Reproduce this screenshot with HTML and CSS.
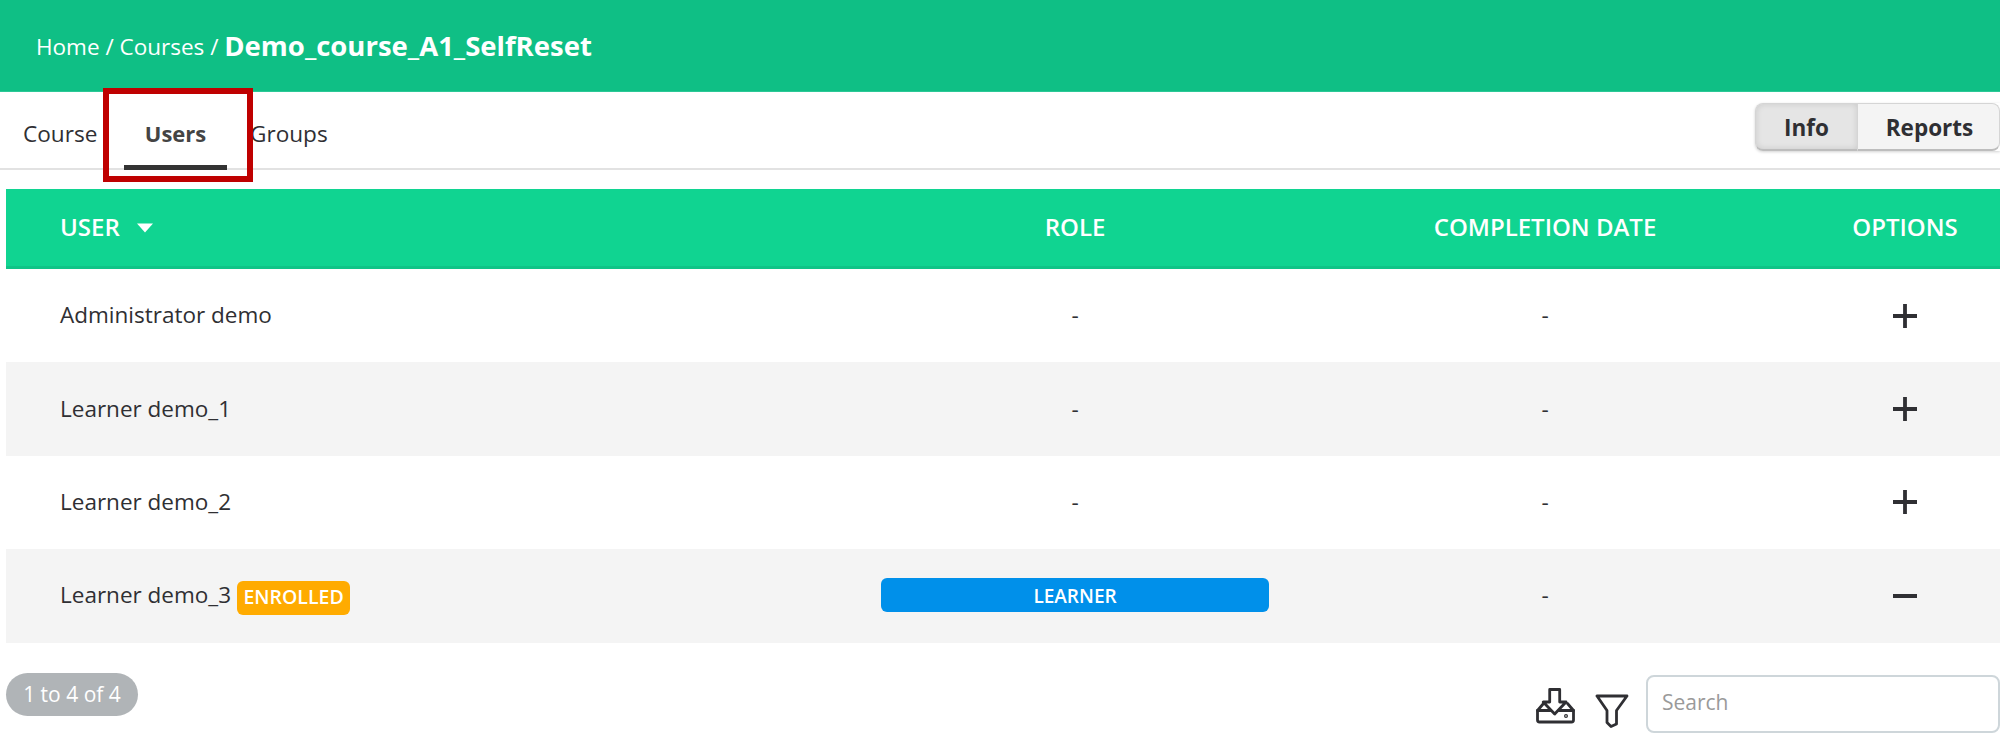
FILE: index.html
```html
<!DOCTYPE html>
<html lang="en">
<head>
<meta charset="utf-8">
<title>Demo_course_A1_SelfReset</title>
<link rel="stylesheet" href="styles.css">
</head>
<body>
<header class="topbar">
  <span class="crumb">Home / Courses / </span><strong class="crumb-title">Demo_course_A1_SelfReset</strong>
</header>
<nav class="tabbar">
  <div class="tabs">
    <a class="tab tab-course">Course</a>
    <a class="tab tab-users">Users</a>
    <a class="tab tab-groups">Groups</a>
    <span class="annotation"></span>
  </div>
  <div class="switch">
    <button class="switch-btn is-active">Info</button>
    <button class="switch-btn">Reports</button>
  </div>
</nav>
<main class="content">
  <div class="table">
    <div class="row head">
      <div class="cell cell-user">USER <svg class="caret" width="18" height="10" viewBox="0 0 18 10"><path d="M1 0.500h16L9 9.500z" fill="#fff"/></svg></div>
      <div class="cell">ROLE</div>
      <div class="cell">COMPLETION DATE</div>
      <div class="cell">OPTIONS</div>
    </div>
    <div class="row">
      <div class="cell cell-user">Administrator demo</div>
      <div class="cell">-</div>
      <div class="cell">-</div>
      <div class="cell"><svg class="opt" width="26" height="26" viewBox="0 0 26 26"><path d="M13 1v24M1 13h24" stroke="#2f2f33" stroke-width="3.800"/></svg></div>
    </div>
    <div class="row alt">
      <div class="cell cell-user">Learner demo_1</div>
      <div class="cell">-</div>
      <div class="cell">-</div>
      <div class="cell"><svg class="opt" width="26" height="26" viewBox="0 0 26 26"><path d="M13 1v24M1 13h24" stroke="#2f2f33" stroke-width="3.800"/></svg></div>
    </div>
    <div class="row">
      <div class="cell cell-user">Learner demo_2</div>
      <div class="cell">-</div>
      <div class="cell">-</div>
      <div class="cell"><svg class="opt" width="26" height="26" viewBox="0 0 26 26"><path d="M13 1v24M1 13h24" stroke="#2f2f33" stroke-width="3.800"/></svg></div>
    </div>
    <div class="row alt">
      <div class="cell cell-user">Learner demo_3 <span class="badge">ENROLLED</span></div>
      <div class="cell"><span class="role">LEARNER</span></div>
      <div class="cell">-</div>
      <div class="cell"><svg class="opt" width="26" height="26" viewBox="0 0 26 26"><path d="M1 13h24" stroke="#2f2f33" stroke-width="4"/></svg></div>
    </div>
  </div>
  <div class="footer">
    <span class="count">1 to 4 of 4</span>
    <div class="tools">
      <svg class="tool tool-export" width="40" height="36" viewBox="0 0 40 36" fill="none" stroke="#2f2f33" stroke-width="2.800" stroke-linejoin="round" stroke-linecap="round"><path d="M13.700 1.500h10V14h6.300L18.700 26 7.200 14h6.500z"/><path d="M7.500 15.500L1.500 22.500v9.500a2 2 0 0 0 2 2h32a2 2 0 0 0 2-2v-9.500l-6-7"/><path d="M1.500 22.500H14.500M23 22.500h14.500"/><circle cx="30" cy="28" r="0.600"/></svg>
      <svg class="tool tool-filter" width="34" height="34" viewBox="0 0 34 34" fill="none" stroke="#2f2f33" stroke-width="2.800" stroke-linejoin="round"><path d="M2 2h30L21.500 16.500V30L16 32.500l-4-4V16.500z"/></svg>
      <input class="search" type="text" placeholder="Search">
    </div>
  </div>
</main>
</body>
</html>
```
FILE: styles.css
```css
* { box-sizing: border-box; }
html, body { margin: 0; padding: 0; }
body {
  width: 2000px;
  height: 734px;
  overflow: hidden;
  background: #fff;
  color: #2f2f33;
  font-family: "Open Sans", "Liberation Sans", sans-serif;
  font-size: 22.500px;
}
.topbar {
  height: 92px;
  background: #0fbf85;
  border-bottom: 1px solid #2cc896;
  color: #fff;
  padding: 2px 0 0 36px;
  display: flex;
  align-items: center;
  white-space: pre;
}
.crumb { font-size: 22.500px; }
.crumb-title { font-size: 27.500px; font-weight: 700; margin-top: -2px; }
.tabbar {
  height: 78px;
  border-bottom: 2px solid #e2e2e2;
  display: flex;
  justify-content: space-between;
  align-items: flex-start;
}
.tabs { display: flex; position: relative; height: 78px; }
.tab { display: block; height: 78px; padding-top: 27px; font-size: 22.600px; line-height: 30px; color: #2f2f33; }
.tab-course { margin-left: 23px; width: 101px; }
.tab-users {
  width: 103px;
  font-size: 22px;
  font-weight: 700;
  text-align: center;
  color: #444;
  padding-top: 26px;
  border-bottom: 5px solid #333;
}
.tab-groups { margin-left: 23px; }
.annotation {
  position: absolute;
  left: 103px;
  top: -4px;
  width: 150px;
  height: 94px;
  border: 6px solid #bf0000;
  pointer-events: none;
}
.switch {
  display: flex;
  margin-top: 11px;
  height: 48px;
  border-radius: 8px 0 0 8px;
  box-shadow: 0 1px 3px rgba(0,0,0,.18);
}
.switch-btn {
  font-family: inherit;
  font-size: 22.500px;
  font-weight: 700;
  color: #2f2f33;
  background: #f4f4f4;
  border: 1px solid #d5d5d5;
  border-bottom: 2px solid #bdbdbd;
  border-left: 0;
  width: 142px;
  padding: 2px 0 0 2px;
  border-radius: 0 8px 8px 0;
}
.switch-btn.is-active {
  background: #e5e5e5;
  width: 103px;
  padding-left: 0;
  border-left: 1px solid #d5d5d5;
  border-radius: 8px 0 0 8px;
  box-shadow: inset 0 0 6px rgba(0,0,0,.12);
}
.content { padding: 19px 0 0 6px; }
.row {
  display: grid;
  grid-template-columns: 864px 410px 530px 190px;
  height: 93.400px;
  align-items: center;
}
.row.alt { background: #f4f4f4; }
.row.head {
  height: 80px;
  background: #10d491;
  border-bottom: 3px solid #0fc487;
  color: #fff;
  font-size: 24px;
  font-weight: 600;
}
.cell { text-align: center; line-height: 30px; padding-bottom: 1px; }
.cell-user { text-align: left; padding-left: 54px; }
.caret { margin-left: 10px; vertical-align: 3px; }
.opt { display: block; margin: 1px auto 0; }
.badge {
  display: inline-block;
  background: #ffab00;
  color: #fff;
  font-size: 19.500px;
  font-weight: 600;
  line-height: 30px;
  height: 34px;
  margin: -4px 0;
  padding: 1px 6.500px;
  border-radius: 6px;
  vertical-align: -1px;
}
.role {
  display: block;
  width: 388px;
  height: 34px;
  margin: 0 auto;
  background: #0090ea;
  color: #fff;
  font-size: 19px;
  font-weight: 600;
  line-height: 36px;
  border-radius: 6px;
}
.footer {
  display: flex;
  justify-content: space-between;
  align-items: flex-start;
  padding-top: 30px;
}
.count {
  width: 132px;
  height: 43px;
  line-height: 43px;
  text-align: center;
  border-radius: 22px;
  background: #b0b4b7;
  color: #fff;
  font-size: 21px;
}
.tools { display: flex; align-items: flex-start; }
.tool { flex: none; }
.tool-export { margin-top: 15px; }
.tool-filter { margin: 21px 17px 0 19px; }
.search {
  width: 354px;
  height: 58px;
  margin-top: 2px;
  border: 2px solid #ced6da;
  border-radius: 8px;
  padding: 0 14px 4px;
  font-family: inherit;
  font-size: 21px;
  color: #2f2f33;
  background: #fff;
  outline: none;
}
.search::placeholder { color: #9a9a9a; opacity: 1; }
```
